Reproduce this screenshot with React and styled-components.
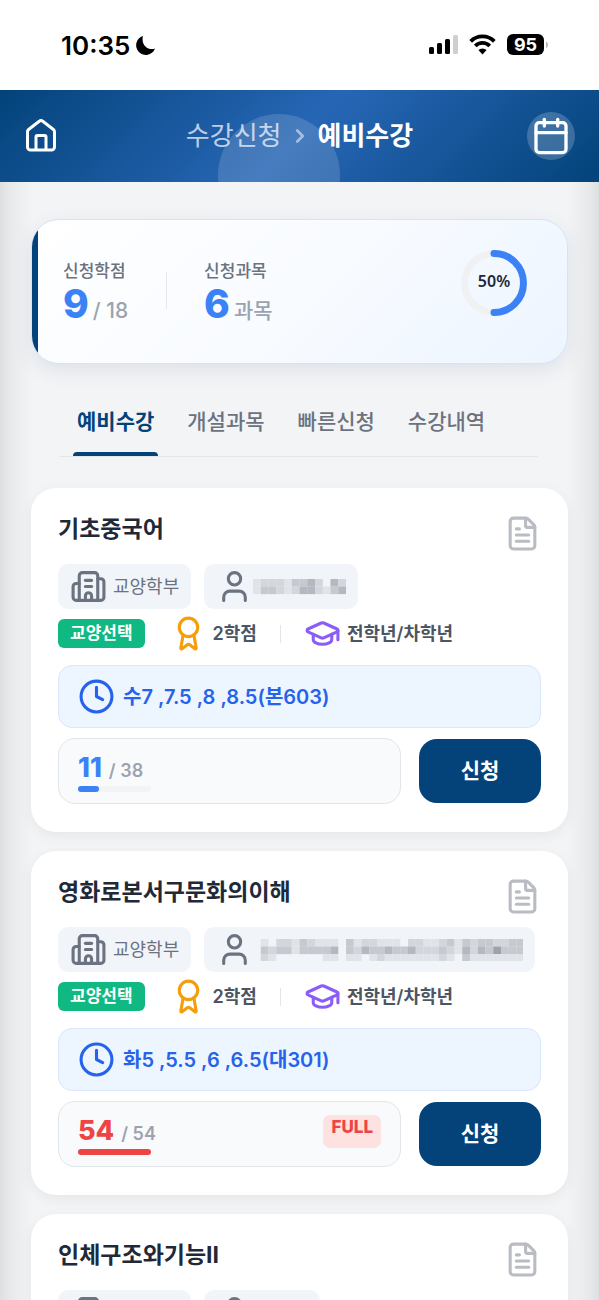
import React from 'react';
import styled, { createGlobalStyle } from 'styled-components';
import { Award, Building2, Calendar, ChevronRight, Clock, FileText, GraduationCap, User } from 'lucide-react';

const courses = [
    {
        id: 1,
        title: '기초중국어',
        department: '교양학부',
        category: '교양선택',
        credit: '2학점',
        grade: '전학년/차학년',
        time: '수7 ,7.5 ,8 ,8.5(본603)',
        applied: 11,
        capacity: 38,
        mask: {
            width: 93, top: 3, rows: [
                [1, 2, 2, 2, 1, 3, 3, 4, 2, 0, 4, 2],
                [1, 3, 3, 2, 1, 2, 4, 4, 2, 1, 3, 4],
            ]
        },
    },
    {
        id: 2,
        title: '영화로본서구문화의이해',
        department: '교양학부',
        category: '교양선택',
        credit: '2학점',
        grade: '전학년/차학년',
        time: '화5 ,5.5 ,6 ,6.5(대301)',
        applied: 54,
        capacity: 54,
        mask: {
            width: 270, top: 0, rows: [
                [0, 1, 0, 2, 2, 1, 3, 2, 1, 1, 1, 0, 3, 1, 2, 2, 1, 1, 1, 0, 2, 2, 1, 1, 2, 3, 1, 3, 2, 3, 3, 2, 2, 3, 3],
                [0, 3, 2, 3, 3, 1, 3, 3, 3, 3, 4, 0, 3, 2, 4, 3, 3, 4, 3, 3, 4, 2, 2, 2, 3, 2, 1, 4, 2, 4, 3, 5, 3, 3, 3],
                [0, 2, 1, 0, 0, 0, 0, 0, 0, 1, 1, 0, 1, 1, 0, 1, 2, 1, 1, 1, 1, 1, 1, 1, 2, 1, 0, 3, 1, 1, 1, 1, 1, 1, 1],
            ]
        },
    },
    {
        id: 3,
        title: '인체구조와기능II',
        department: '교양학부',
        category: '교양선택',
        credit: '2학점',
        grade: '전학년/차학년',
        time: '목5 ,5.5 ,6 ,6.5(본603)',
        applied: 20,
        capacity: 40,
        mask: { width: 55, top: 3, rows: [[1, 2, 3, 2, 3, 2, 1], [2, 3, 3, 4, 3, 2, 2]] },
    },
];

const tabs = ['예비수강', '개설과목', '빠른신청', '수강내역'];
const maskShades = ['none', '#e0e3e8', '#d3d6dc', '#c6c9d0', '#b5b8c0', '#9fa2aa'];

const StatusIcons = () => (
    <svg width="122" height="24" viewBox="0 0 122 24" aria-hidden="true">
        <rect x="1" y="14" width="5" height="7" rx="1.5" />
        <rect x="9" y="10" width="5" height="11" rx="1.5" />
        <rect x="17" y="6" width="5" height="15" rx="1.5" />
        <rect x="25" y="2" width="5" height="19" rx="1.5" fill="#cfcfcf" />
        <g fill="none" stroke="#000" strokeWidth="3.8">
            <path d="M42.7 8.400a16.500 16.500 0 0 1 23.600 0" />
            <path d="M47.300 13a10 10 0 0 1 14.400 0" />
        </g>
        <path d="M50.400 17a6.200 6.200 0 0 1 8.200 0L54.500 21.400z" />
        <rect x="79" y="1" width="37" height="21" rx="6" />
        <path d="M118 8.500a3.600 3.600 0 0 1 0 6.500z" fill="#b4b4b4" />
        <text x="97.500" y="18" textAnchor="middle" fill="#fff" fontFamily="Inter, sans-serif" fontSize="18" fontWeight="700">95</text>
    </svg>
);

const Mask = ({ width, top, rows }) => (
    <svg width={width} height="22" viewBox={`0 0 ${width} 22`} role="img" aria-label="교수명 비공개">
        {rows.map((row, y) => row.map((shade, x) => (
            <rect
                key={`${x}-${y}`}
                x={x * 7.75}
                y={top + y * 7.5}
                width="7.8"
                height="7.6"
                fill={maskShades[shade]}
            />
        )))}
    </svg>
);

const CourseCard = ({ course }) => {
    const full = course.applied >= course.capacity;

    return (
        <Card>
            <CardHead>
                <CourseTitle>{course.title}</CourseTitle>
                <PlanButton type="button" aria-label="강의계획서">
                    <FileText size={37} />
                </PlanButton>
            </CardHead>
            <ChipRow>
                <Chip><Building2 size={37} /><IconText>{course.department}</IconText></Chip>
                <Chip><User size={37} /><Mask {...course.mask} /></Chip>
            </ChipRow>
            <MetaRow>
                <Category>{course.category}</Category>
                <Meta $color="#f59e0b"><Award size={37} /><IconText>{course.credit}</IconText></Meta>
                <MetaLine />
                <Meta $color="#8b5cf6"><GraduationCap size={37} /><IconText>{course.grade}</IconText></Meta>
            </MetaRow>
            <TimeBox><Clock size={37} /><IconText>{course.time}</IconText></TimeBox>
            <ApplyRow>
                <SeatBox>
                    <div>
                        <SeatText $full={full}><strong>{course.applied}</strong>/ {course.capacity}</SeatText>
                        <SeatTrack>
                            <SeatFill $full={full} style={{ width: `${course.applied / course.capacity * 100}%` }} />
                        </SeatTrack>
                    </div>
                    {full && <FullBadge>FULL</FullBadge>}
                </SeatBox>
                <ApplyButton type="button">신청</ApplyButton>
            </ApplyRow>
        </Card>
    );
};

const App = () => {
    return (
        <Page>
            <GlobalStyle />
            <StatusBar>
                <Clocktime>
                    10:35
                    <svg width="21" height="21" viewBox="0 0 22 22" aria-hidden="true">
                        <path d="M8.300 1A10.200 10.200 0 1 0 21 14.200C14.500 16.500 6 11.500 8.300 1z" />
                    </svg>
                </Clocktime>
                <StatusIcons />
            </StatusBar>
            <Header>
                <HomeLink href="#home" aria-label="홈">
                    <svg width="34" height="34" viewBox="0 0 34 34" fill="none" stroke="#fff" strokeWidth="3" strokeLinejoin="round" aria-hidden="true">
                        <path d="M3.500 12.800a3 3 0 0 1 1.100-2.300L15.200 2.300a2.800 2.800 0 0 1 3.600 0L29.400 10.500a3 3 0 0 1 1.100 2.300V28a3 3 0 0 1-3 3H6.500a3 3 0 0 1-3-3z" />
                        <path d="M12 31V18a1.500 1.500 0 0 1 1.500-1.500h7A1.500 1.500 0 0 1 22 18v13" />
                    </svg>
                </HomeLink>
                <Breadcrumb>
                    <CrumbLink href="#courses">수강신청</CrumbLink>
                    <ChevronRight size={22} strokeWidth={3} />
                    <CrumbNow>예비수강</CrumbNow>
                </Breadcrumb>
                <CalendarButton type="button" aria-label="시간표">
                    <Calendar size={40} />
                </CalendarButton>
            </Header>
            <Content>
                <Summary>
                    <Stat>
                        <StatLabel>신청학점</StatLabel>
                        <StatValue><strong>9</strong>/ 18</StatValue>
                    </Stat>
                    <StatLine />
                    <Stat>
                        <StatLabel>신청과목</StatLabel>
                        <StatValue><strong>6</strong>과목</StatValue>
                    </Stat>
                    <Ring>
                        <svg width="66" height="66" viewBox="0 0 66 66" fill="none" strokeWidth="7" aria-hidden="true">
                            <circle cx="33" cy="33" r="29.500" stroke="#f0f1f2" />
                            <path d="M33 3.500a29.500 29.500 0 0 1 0 59" stroke="#3b82f6" strokeLinecap="round" />
                        </svg>
                        <RingText>50%</RingText>
                    </Ring>
                </Summary>
                <Tabs>
                    {tabs.map((tab, i) => (
                        <Tab key={tab} type="button" $active={i === 0}>{tab}</Tab>
                    ))}
                </Tabs>
                <CardList>
                    {courses.map(course => <CourseCard key={course.id} course={course} />)}
                </CardList>
            </Content>
        </Page>
    );
};

const GlobalStyle = createGlobalStyle`
    * {
        box-sizing: border-box;
    }
    html {
        height: 100%;
        overflow: hidden;
    }
    body {
        margin: 0;
        height: 100%;
        overflow: hidden auto;
        scrollbar-width: none;
        font-family: Inter, 'Noto Sans CJK KR', sans-serif;
        color: #1f2937;
    }
    button {
        font-family: inherit;
        border: 0;
        padding: 0;
        background: none;
        cursor: pointer;
    }
    a {
        color: inherit;
        text-decoration: none;
    }
    svg {
        display: block;
        flex-shrink: 0;
    }
`

const Page = styled.div`
    background: #f3f4f6;
`

const StatusBar = styled.div`
    display: flex;
    align-items: center;
    justify-content: space-between;
    height: 90px;
    padding: 0 49px 0 61px;
    background: #fff;
`

const Clocktime = styled.div`
    display: flex;
    align-items: center;
    gap: 5px;
    font-size: 26px;
    font-weight: 600;
    color: #000;
`

const Header = styled.header`
    position: relative;
    overflow: hidden;
    display: grid;
    grid-template-columns: 1fr auto 1fr;
    align-items: center;
    height: 92px;
    padding: 0 24px;
    color: #fff;
    background: linear-gradient(135deg, #03437a 0%, #2766b5 50%, #03437a 100%);

    &::before {
        content: '';
        position: absolute;
        left: calc(50% - 82px);
        top: 24px;
        width: 122px;
        height: 122px;
        border-radius: 50%;
        background: rgba(255, 255, 255, 0.15);
    }
`

const HomeLink = styled.a`
    justify-self: start;
`

const Breadcrumb = styled.nav`
    position: relative;
    display: flex;
    align-items: center;
    gap: 7px;
    font-size: 26px;
    line-height: 36px;

    svg {
        opacity: 0.5;
    }
`

const CrumbLink = styled.a`
    opacity: 0.7;
`

const CrumbNow = styled.span`
    font-weight: 700;
`

const CalendarButton = styled.button`
    justify-self: end;
    display: flex;
    align-items: center;
    justify-content: center;
    width: 48px;
    height: 48px;
    border-radius: 50%;
    color: #fff;
    background: rgba(255, 255, 255, 0.2);
`

const Content = styled.main`
    padding: 37px 31px;
    background: linear-gradient(90deg, #dedfe1 0, #e8e9eb 10px, #f3f4f6 32px, #f3f4f6 calc(100% - 32px), #e8e9eb calc(100% - 10px), #dedfe1 100%);
`

const Summary = styled.section`
    position: relative;
    overflow: hidden;
    display: flex;
    align-items: flex-start;
    height: 145px;
    padding: 30px 40px 30px 31px;
    border: 1px solid #d3e3f8;
    border-radius: 28px;
    background: linear-gradient(135deg, #fff 0%, #f8fbff 50%, #edf5ff 100%);
    box-shadow: 0 6px 20px rgba(30, 64, 120, 0.1);

    &::before {
        content: '';
        position: absolute;
        left: 0;
        top: 0;
        bottom: 0;
        width: 6px;
        background: #03437a;
    }
`

const Stat = styled.div`
    padding-top: 11px;
`

const StatLabel = styled.div`
    font-size: 17px;
    line-height: 20px;
    font-weight: 500;
    color: #6b7280;
`

const StatValue = styled.div`
    display: flex;
    align-items: baseline;
    gap: 4px;
    font-size: 21px;
    line-height: 46px;
    font-weight: 500;
    color: #9ca3af;

    strong {
        font-size: 39px;
        font-weight: 800;
        color: #3b82f6;
    }
`

const StatLine = styled.div`
    width: 1px;
    height: 37px;
    margin: 22px 37px 0 38px;
    background: #e5e7eb;
`

const Ring = styled.div`
    display: grid;
    place-items: center;
    margin-left: auto;

    > * {
        grid-area: 1 / 1;
    }
`

const RingText = styled.span`
    padding-bottom: 4px;
    font-family: 'Noto Sans', sans-serif;
    font-size: 16px;
    line-height: 20px;
    font-weight: 600;
`

const Tabs = styled.nav`
    display: flex;
    gap: 25px;
    margin: 36px 30px 31px 29px;
    padding: 0 13px;
    border-bottom: 1px solid #e3e5e9;
`

const Tab = styled.button`
    display: flex;
    flex-direction: column;
    height: 56px;
    padding: 7px 4px 0;
    font-size: 21px;
    line-height: 30px;
    font-weight: ${props => props.$active ? 700 : 500};
    color: ${props => props.$active ? '#03437a' : '#6b7280'};

    &::after {
        content: '';
        align-self: stretch;
        height: 4px;
        margin: auto -4px 0;
        border-radius: 4px 4px 0 0;
        background: ${props => props.$active ? '#03437a' : 'transparent'};
    }
`

const CardList = styled.div`
    display: flex;
    flex-direction: column;
    gap: 19px;
`

const Card = styled.article`
    padding: 27px 27px 28px;
    border-radius: 25px;
    background: #fff;
    box-shadow: 0 4px 14px rgba(0, 0, 0, 0.06);
`

const CardHead = styled.div`
    display: flex;
    align-items: flex-start;
    justify-content: space-between;
`

const CourseTitle = styled.h2`
    margin: 0;
    font-size: 23px;
    line-height: 28px;
    font-weight: 700;
`

const PlanButton = styled.button`
    color: #b9bcc2;
`

const IconText = styled.span`
    padding-left: 6px;
    line-height: 24px;
    white-space: nowrap;
`

const ChipRow = styled.div`
    display: flex;
    gap: 13px;
    margin-top: 12px;
`

const Chip = styled.span`
    display: flex;
    align-items: center;
    height: 45px;
    padding: 0 12px;
    border-radius: 10px;
    font-size: 18px;
    color: #6b7280;
    background: #f1f4f9;
`

const MetaRow = styled.div`
    display: flex;
    align-items: center;
    height: 37px;
    margin-top: 6px;
`

const Category = styled.span`
    margin-right: 25px;
    padding: 0 12px;
    border-radius: 6px;
    font-size: 17px;
    line-height: 29px;
    font-weight: 600;
    color: #fff;
    background: #10b981;
`

const Meta = styled.span`
    display: flex;
    align-items: center;
    font-size: 18px;
    font-weight: 600;
    color: #4b5563;

    svg {
        color: ${props => props.$color};
    }
`

const MetaLine = styled.span`
    width: 1px;
    height: 18px;
    margin: 0 23px;
    background: #e2e5ea;
`

const TimeBox = styled.div`
    display: flex;
    align-items: center;
    gap: 2px;
    height: 63px;
    margin-top: 13px;
    padding: 0 19px;
    border: 1px solid #dbe7fb;
    border-radius: 14px;
    font-size: 20px;
    font-weight: 600;
    color: #2563eb;
    background: #edf5ff;
`

const ApplyRow = styled.div`
    display: flex;
    align-items: center;
    gap: 18px;
    margin-top: 10px;
`

const SeatBox = styled.div`
    flex: 1;
    display: flex;
    align-items: center;
    justify-content: space-between;
    height: 66px;
    padding: 0 19px;
    border: 1px solid #e2e5ea;
    border-radius: 17px;
    background: #f9fafc;
`

const SeatText = styled.div`
    display: flex;
    align-items: baseline;
    gap: 7px;
    padding-top: 3px;
    font-size: 18px;
    line-height: 30px;
    font-weight: 600;
    color: #9ca3af;

    strong {
        font-size: 27px;
        font-weight: 800;
        color: ${props => props.$full ? '#ef4444' : '#3b82f6'};
    }
`

const SeatTrack = styled.div`
    width: 73px;
    height: 6px;
    border-radius: 3px;
    background: #f3f4f6;
`

const SeatFill = styled.div`
    height: 100%;
    border-radius: 3px;
    background: ${props => props.$full ? '#ef4444' : '#3b82f6'};
`

const FullBadge = styled.span`
    height: 33px;
    margin-bottom: 6px;
    padding: 0 8px;
    border-radius: 7px;
    font-size: 17px;
    line-height: 25px;
    font-weight: 800;
    color: #ef4444;
    background: #fee2e2;
`

const ApplyButton = styled.button`
    width: 122px;
    height: 64px;
    padding-bottom: 4px;
    border-radius: 18px;
    font-size: 21px;
    font-weight: 700;
    color: #fff;
    background: #03437a;
`

export default App;
